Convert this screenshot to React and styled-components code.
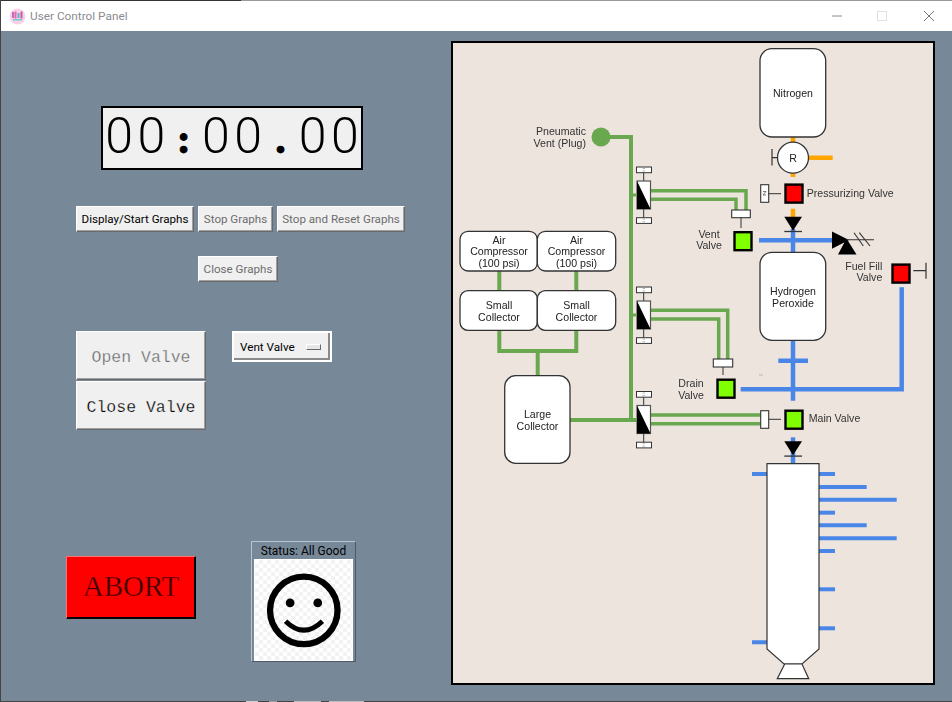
import styled, { createGlobalStyle } from 'styled-components';

const GlobalStyle = createGlobalStyle`
  html, body {
    margin: 0;
    padding: 0;
    background: #778899;
  }
  * {
    box-sizing: border-box;
  }
`;

const uiFont = `Roboto, "Open Sans", sans-serif`;
const GREEN = '#6aa84f';
const BLUE = '#4a86e8';
const ORANGE = '#ffa500';
const LINE = '#333';

const Window = styled.div`
  width: 952px;
  height: 702px;
  display: flex;
  flex-direction: column;
  overflow: hidden;
  background: #778899;
  border-left: 1px solid #444;
  font-family: ${uiFont};
`;

const TitleBar = styled.header`
  height: 31px;
  flex: none;
  display: flex;
  align-items: center;
  background: #fff;
  padding-left: 8px;
  border-top: 1px solid;
  border-image: linear-gradient(to right, #333 240px, #999 240px) 1;
`;

const AppIcon = styled.svg`
  width: 17px;
  height: 17px;
  flex: none;
`;

const TitleText = styled.span`
  margin-left: 4px;
  font-size: 11.8px;
  color: #8b8b92;
`;

const WindowControls = styled.div`
  margin-left: auto;
  display: flex;
  align-items: center;
`;

const ControlIcon = styled.svg`
  width: 46px;
  height: 30px;
  display: block;
`;

const Body = styled.main`
  flex: 1;
  display: flex;
  min-height: 0;
`;

const BottomEdge = styled.div`
  height: 1px;
  flex: none;
  background: linear-gradient(
    to right,
    #444 245px,
    #cfcfcf 245px 257px,
    #444 257px 268px,
    #9a9a9a 268px 276px,
    #444 276px 293px,
    #bdbdbd 293px 320px,
    #444 320px 328px,
    #bdbdbd 328px 363px,
    #444 363px
  );
`;

const ControlPanel = styled.section`
  width: 450px;
  flex: none;
  display: flex;
  flex-direction: column;
  align-items: flex-start;
  padding-top: 75px;
`;

const Timer = styled.div`
  width: 262px;
  height: 64px;
  margin-left: 100px;
  display: flex;
  align-items: baseline;
  justify-content: center;
  background: #f0f0f0;
  border: 2px solid #000;
  color: #000;
`;

const TimerDigit = styled.span`
  width: 32.4px;
  text-align: center;
  font-family: Roboto, sans-serif;
  font-size: 50px;
  font-weight: 300;
  line-height: 56px;
`;

const TimerMark = styled.span`
  width: 32.4px;
  text-align: center;
  font-family: "Liberation Serif", serif;
  font-size: 42px;
  font-weight: 700;
  line-height: 40px;
  -webkit-text-stroke: 1px #000;
`;

const GraphButtons = styled.div`
  display: flex;
  gap: 4px;
  margin: 36px 0 0 75px;
`;

const TkButton = styled.button`
  height: 26px;
  padding: 0;
  width: ${(p) => p.$w}px;
  background: #f0f0f0;
  border: 1px solid;
  border-color: #fff #696969 #696969 #fff;
  box-shadow: inset -1px -1px 0 #a0a0a0;
  font-family: ${uiFont};
  font-size: 11.6px;
  color: ${(p) => (p.$muted ? '#6d6d6d' : '#000')};
`;

const CloseGraphsButton = styled(TkButton)`
  margin: 24px 0 0 197px;
`;

const ValveRow = styled.div`
  display: flex;
  align-items: flex-start;
  gap: 26px;
  margin: 49px 0 0 75px;
`;

const ValveButtons = styled.div`
  display: flex;
  flex-direction: column;
  gap: 1px;
`;

const ValveButton = styled(TkButton)`
  width: 130px;
  height: 49px;
  padding-top: 4px;
  font-family: "Liberation Mono", monospace;
  font-size: 16.5px;
  -webkit-text-stroke: 0.25px #f0f0f0;
`;

const ValveSelect = styled.div`
  width: 100px;
  height: 31px;
  display: flex;
  align-items: center;
  justify-content: space-between;
  padding: 1px 9px 0 6px;
  background: #f0f0f0;
  border: 2px solid #fff;
  box-shadow: inset -2px -2px 0 #8a8a8a;
  font-size: 11.7px;
  color: #000;
`;

const SelectMark = styled.span`
  width: 15px;
  height: 6px;
  background: #e6e6e6;
  border: 1px solid;
  border-color: #fff #696969 #696969 #fff;
`;

const BottomRow = styled.div`
  display: flex;
  align-items: flex-start;
  gap: 55px;
  margin: 111px 0 0 65px;
`;

const AbortButton = styled.button`
  width: 130px;
  height: 63px;
  margin-top: 15px;
  padding: 0 0 3px;
  background: #f00;
  border: 1px solid;
  border-color: #ff7070 #000 #000 #ff7070;
  box-shadow: inset -1px -1px 0 #000;
  font-family: "Liberation Serif", serif;
  font-size: 29px;
  color: #300;
  -webkit-text-stroke: 0.35px #f00;
`;

const StatusBox = styled.figure`
  width: 105px;
  height: 121px;
  margin: 0;
  display: flex;
  flex-direction: column;
  border: 1px solid;
  border-color: #b9c3cd #4f5a66 #4f5a66 #b9c3cd;
  padding: 1px;
  box-shadow: inset 0 0 0 1px #778899;
`;

const StatusLabel = styled.figcaption`
  height: 17px;
  padding-top: 1px;
  text-align: center;
  font-size: 12px;
  line-height: 15px;
  color: #000;
`;

const StatusImage = styled.div`
  flex: 1;
  margin: 0 1px 1px;
  display: flex;
  align-items: center;
  justify-content: center;
  background-color: #fff;
  background-image: repeating-conic-gradient(#f2f2f2 0 25%, #fff 0 50%);
  background-size: 8px 8px;
  border: 1px solid #fff;
`;

const SmileyIcon = styled.svg`
  width: 100px;
  height: 100px;
`;

const DiagramFrame = styled.section`
  width: 484px;
  height: 644px;
  margin-top: 10px;
  border: 2px solid #000;
  background: #ede4de;
`;

const Diagram = styled.svg`
  display: block;
  width: 480px;
  height: 640px;
  filter: blur(0.4px);
  font-family: "Liberation Sans", Arial, sans-serif;
  font-size: 10.6px;
`;

const Label = styled.text`
  fill: ${(p) => p.$fill || '#333'};
  text-anchor: ${(p) => p.$anchor || 'middle'};
`;

const Pipe = ({ d, color = GREEN, w = 4 }) => (
  <path d={d} fill="none" stroke={color} strokeWidth={w} strokeLinejoin="miter" />
);

const Tank = ({ x, y, w, h, r = 11 }) => (
  <rect x={x} y={y} width={w} height={h} rx={r} fill="#fff" stroke={LINE} strokeWidth="1.3" />
);

const Lines = ({ x, y, lines, anchor, step = 11.7, fill }) =>
  lines.map((t, i) => (
    <Label key={t} x={x} y={y + i * step} $anchor={anchor} $fill={fill}>
      {t}
    </Label>
  ));

const Indicator = ({ x, y, fill }) => (
  <rect x={x + 1.2} y={y + 1.2} width="17" height="18" fill={fill} stroke="#000" strokeWidth="2.4" />
);

// three-way solenoid valve on the pneumatic line, y is the top of the body
const Solenoid = ({ y }) => (
  <g>
    <path d={`M643.7 ${y - 9}V${y + 37}`} stroke={LINE} strokeWidth="1" />
    <rect x="636.5" y={y - 14} width="15" height="5.7" fill="#fff" stroke={LINE} strokeWidth="1" />
    <rect x="636.5" y={y + 36.7} width="15" height="5.7" fill="#fff" stroke={LINE} strokeWidth="1" />
    <path d={`M642.5 ${y - 12.5}H645M642.5 ${y - 10}H645M642.5 ${y + 38.2}H645M642.5 ${y + 40.7}H645`} stroke="#999" strokeWidth="0.7" />
    <rect x="637" y={y} width="13.5" height="28" fill="#fff" stroke="#555" strokeWidth="1.2" />
    <path d={`M637 ${y}L650.5 ${y + 28}H637Z`} fill="#000" />
    <path d={`M631 ${y + 14}H637`} stroke={GREEN} strokeWidth="3" />
  </g>
);

const CheckValve = ({ y }) => (
  <g>
    <path d={`M784.3 ${y}H802L793 ${y + 14}Z`} fill="#000" />
    <path d={`M784.3 ${y + 14.8}H802`} stroke={LINE} strokeWidth="1.3" />
  </g>
);

const tapLines = [
  [474, 835],
  [487, 866.7],
  [499.7, 896.7],
  [512.7, 835],
  [525.3, 866.7],
  [538.3, 896.7],
  [551, 835],
  [589.3, 835],
  [628.3, 835],
];

const PlantDiagram = () => (
  <Diagram viewBox="453 43 480 640">
    {/* pneumatic side */}
    <circle cx="601" cy="137" r="9.5" fill={GREEN} />
    <Pipe d="M601 137H631V422" />
    <Pipe d="M570 420H637" />
    <Pipe d="M499.3 271V291M576.3 271V291" />
    <Pipe d="M499.3 330V351H576.3V330M537.7 351V376" />
    <Pipe d="M651 190.7H746V210M651 199.3H736V210" w={3.5} />
    <Pipe d="M651 310.3H727.7V359M651 319H718.7V359" w={3.5} />
    <Pipe d="M651 415H761M651 423.7H761" w={3.5} />

    {/* orange nitrogen line */}
    <Pipe d="M793 137V143M809 157.7H832.7M793 173V177M793 208.7V217" color={ORANGE} w={4.5} />

    {/* blue propellant lines */}
    <Pipe d="M793 229V253M759 240.3H832.3" color={BLUE} w={4.5} />
    <Pipe d="M793 340V400.7M778.3 360.7H808" color={BLUE} w={4.5} />
    <Pipe d="M740.7 389.3H901.7V287.3" color={BLUE} w={4.5} />
    <Pipe d="M793 437.3V464" color={BLUE} w={4.5} />
    {tapLines.map(([y, x2]) => (
      <Pipe key={y} d={`M819 ${y}H${x2}`} color={BLUE} />
    ))}
    <Pipe d="M752 474H767M752 642.3H767" color={BLUE} />
    <path d="M759 375H763" stroke="#aaa" strokeWidth="0.8" />

    <Solenoid y={181} />
    <Solenoid y={301} />
    <Solenoid y={405.5} />

    {/* tanks */}
    <Tank x={460} y={231.3} w={77.3} h={39.7} r={8} />
    <Tank x={537.3} y={231.3} w={78.4} h={39.7} r={8} />
    <Tank x={460} y={290.7} w={77.3} h={39.6} r={8} />
    <Tank x={537.3} y={290.7} w={78.4} h={39.6} r={8} />
    <Tank x={504.7} y={375.7} w={65.3} h={87.6} />
    <Tank x={760} y={48.7} w={65.7} h={88.3} r={12} />
    <Tank x={760} y={252.3} w={65.7} h={88} r={12} />

    {/* regulator */}
    <circle cx="793" cy="157.7" r="15.5" fill="#fff" stroke={LINE} strokeWidth="1.3" />
    <path d="M772 157.7H778M772 149V165.5" stroke={LINE} strokeWidth="1.2" fill="none" />
    <Label x={793} y={162} $fill="#222">R</Label>

    {/* valve actuators */}
    <rect x="731.7" y="210" width="18.6" height="7.7" fill="#fff" stroke={LINE} strokeWidth="1.1" />
    <path d="M741 217.7V228" stroke={LINE} strokeWidth="1" />
    <rect x="713.3" y="359" width="19.4" height="8" fill="#fff" stroke={LINE} strokeWidth="1.1" />
    <path d="M723 367V375" stroke={LINE} strokeWidth="1" />
    <rect x="760.7" y="410.7" width="8" height="17.6" fill="#fff" stroke={LINE} strokeWidth="1.1" />
    <path d="M768.7 419.3H781" stroke={LINE} strokeWidth="1" />
    <rect x="760.7" y="184.7" width="8" height="17.6" fill="#fff" stroke={LINE} strokeWidth="1.1" />
    <path d="M763 191.5H766L763 195H766" stroke="#555" strokeWidth="0.8" fill="none" />
    <path d="M768.7 193.7H781" stroke={LINE} strokeWidth="1" />
    <path d="M913.3 270.7H926M926 262.7V278.7" stroke={LINE} strokeWidth="1.2" fill="none" />

    <Indicator x={784.3} y={183.4} fill="#f00" />
    <Indicator x={733.3} y={231} fill="#7fff00" />
    <Indicator x={716.3} y={378.5} fill="#7fff00" />
    <Indicator x={784.3} y={409.5} fill="#7fff00" />
    <Indicator x={891.3} y={263.4} fill="#f00" />

    <CheckValve y={216.7} />
    <CheckValve y={441.3} />

    {/* fill valve symbol */}
    <path d="M832 231.5V248.7L849 240ZM838 254.5H856.5L846.5 238.5Z" fill="#000" />
    <path d="M846 239.7H874M854 232.7L863.3 246M859.3 232.7L870 246" stroke={LINE} strokeWidth="1.1" fill="none" />

    {/* tower */}
    <path d="M767 463.7H819V649L802 664H784L767 649Z" fill="#fff" stroke={LINE} strokeWidth="1.2" />
    <path d="M784.7 664L777.3 678.7H808.7L802 664Z" fill="#fff" stroke={LINE} strokeWidth="1.2" />

    {/* labels */}
    <Lines x={586} y={135} lines={['Pneumatic', 'Vent (Plug)']} anchor="end" />
    <Lines x={499} y={243.5} lines={['Air', 'Compressor', '(100 psi)']} fill="#222" />
    <Lines x={576.5} y={243.5} lines={['Air', 'Compressor', '(100 psi)']} fill="#222" />
    <Lines x={499} y={309} lines={['Small', 'Collector']} fill="#222" />
    <Lines x={576.5} y={309} lines={['Small', 'Collector']} fill="#222" />
    <Lines x={537.5} y={418} lines={['Large', 'Collector']} fill="#222" />
    <Lines x={793} y={97} lines={['Nitrogen']} fill="#222" />
    <Lines x={793} y={295} lines={['Hydrogen', 'Peroxide']} fill="#222" />
    <Lines x={709} y={237.5} lines={['Vent', 'Valve']} />
    <Lines x={691} y={387} lines={['Drain', 'Valve']} />
    <Lines x={882.3} y={269.5} lines={['Fuel Fill', 'Valve']} anchor="end" />
    <Lines x={806.7} y={197} lines={['Pressurizing Valve']} anchor="start" />
    <Lines x={808.7} y={422.3} lines={['Main Valve']} anchor="start" />
  </Diagram>
);

const timerValue = '00:00.00';

const App = () => (
  <Window>
    <GlobalStyle />
    <TitleBar>
      <AppIcon viewBox="0 0 17 17">
        <circle cx="8.5" cy="8.5" r="8" fill="#fbd0ea" />
        <rect x="3" y="4" width="2" height="6" fill="#c06ad0" />
        <rect x="5.5" y="3.5" width="2" height="7" fill="#e66a8a" />
        <rect x="8.5" y="5" width="2" height="5" fill="#5ab4d8" />
        <rect x="11.5" y="3.5" width="2" height="7" fill="#c45aa0" />
        <rect x="4" y="11" width="9" height="1.5" fill="#6fd0c8" />
      </AppIcon>
      <TitleText>User Control Panel</TitleText>
      <WindowControls>
        <ControlIcon viewBox="0 0 46 30">
          <path d="M18 15H28" stroke="#8a8a8a" strokeWidth="1" />
        </ControlIcon>
        <ControlIcon viewBox="0 0 46 30">
          <rect x="17.5" y="10.5" width="9" height="9" fill="none" stroke="#e2e2e2" />
        </ControlIcon>
        <ControlIcon viewBox="0 0 46 30">
          <path d="M18 10L28 20M28 10L18 20" stroke="#777" strokeWidth="1" />
        </ControlIcon>
      </WindowControls>
    </TitleBar>
    <Body>
      <ControlPanel>
        <Timer>
          {[...timerValue].map((c, i) =>
            c === ':' || c === '.' ? (
              <TimerMark key={i}>{c}</TimerMark>
            ) : (
              <TimerDigit key={i}>{c}</TimerDigit>
            )
          )}
        </Timer>
        <GraphButtons>
          <TkButton $w={118}>Display/Start Graphs</TkButton>
          <TkButton $w={75} $muted>Stop Graphs</TkButton>
          <TkButton $w={128} $muted>Stop and Reset Graphs</TkButton>
        </GraphButtons>
        <CloseGraphsButton $w={80} $muted>Close Graphs</CloseGraphsButton>
        <ValveRow>
          <ValveButtons>
            <ValveButton $muted>Open Valve</ValveButton>
            <ValveButton>Close Valve</ValveButton>
          </ValveButtons>
          <ValveSelect>
            Vent Valve
            <SelectMark />
          </ValveSelect>
        </ValveRow>
        <BottomRow>
          <AbortButton>ABORT</AbortButton>
          <StatusBox>
            <StatusLabel>Status: All Good</StatusLabel>
            <StatusImage>
              <SmileyIcon viewBox="0 0 100 100">
                <circle cx="50.3" cy="50.3" r="34.8" fill="none" stroke="#000" strokeWidth="6.5" />
                <circle cx="36.2" cy="42.7" r="4.5" fill="#000" />
                <circle cx="64.7" cy="42.7" r="4.5" fill="#000" />
                <path d="M31.5 61.5Q50.3 80 69.5 61.5" fill="none" stroke="#000" strokeWidth="5" />
              </SmileyIcon>
            </StatusImage>
          </StatusBox>
        </BottomRow>
      </ControlPanel>
      <DiagramFrame>
        <PlantDiagram />
      </DiagramFrame>
    </Body>
    <BottomEdge />
  </Window>
);

export default App;
